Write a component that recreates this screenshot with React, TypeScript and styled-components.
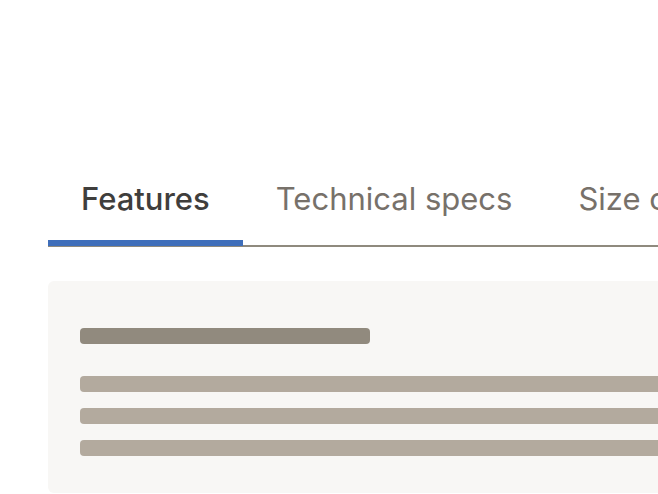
import styled, { createGlobalStyle } from 'styled-components';

const GlobalStyle = createGlobalStyle`
  html, body {
    margin: 0;
    padding: 0;
    background: #ffffff;
    overflow: hidden;
  }
  body {
    font-family: Inter, "Noto Sans", sans-serif;
  }
`;

const tabs = ['Features', 'Technical specs', 'Size chart', 'Reviews'];

const App = () => {
  return (
    <>
      <GlobalStyle />
      <Page>
        <TabList>
          {tabs.map((label, i) => (
            <Tab key={label} active={i === 0}>
              {label}
            </Tab>
          ))}
        </TabList>
        <Panel>
          <TitleBar />
          <LineGroup>
            <Line />
            <Line />
            <Line />
          </LineGroup>
        </Panel>
      </Page>
    </>
  );
};

export default App;

const Page = styled.div`
  width: 1100px;
  padding: 166px 48px 0;
  box-sizing: border-box;
`;

const TabList = styled.div`
  display: flex;
  border-bottom: 2px solid #8f8a7e;
`;

const Tab = styled.div<{ active?: boolean }>`
  position: relative;
  padding: 14px 33px 27px;
  font-size: 31px;
  line-height: 38px;
  font-weight: ${(p) => (p.active ? 500 : 400)};
  color: ${(p) => (p.active ? '#3f3e3c' : '#77716a')};
  white-space: nowrap;

  &::after {
    content: '';
    display: ${(p) => (p.active ? 'block' : 'none')};
    position: absolute;
    left: 0;
    right: 0;
    bottom: -1px;
    height: 6px;
    background: #3f6eba;
  }
`;

const Panel = styled.div`
  margin-top: 34px;
  height: 212px;
  box-sizing: border-box;
  padding: 47px 32px 0;
  background: #f8f7f5;
  border-radius: 6px;
`;

const TitleBar = styled.div`
  width: 290px;
  height: 16px;
  border-radius: 4px;
  background: #918a7e;
`;

const LineGroup = styled.div`
  display: flex;
  flex-direction: column;
  gap: 16px;
  margin-top: 32px;
`;

const Line = styled.div`
  height: 16px;
  border-radius: 4px;
  background: #b3aa9e;
`;
